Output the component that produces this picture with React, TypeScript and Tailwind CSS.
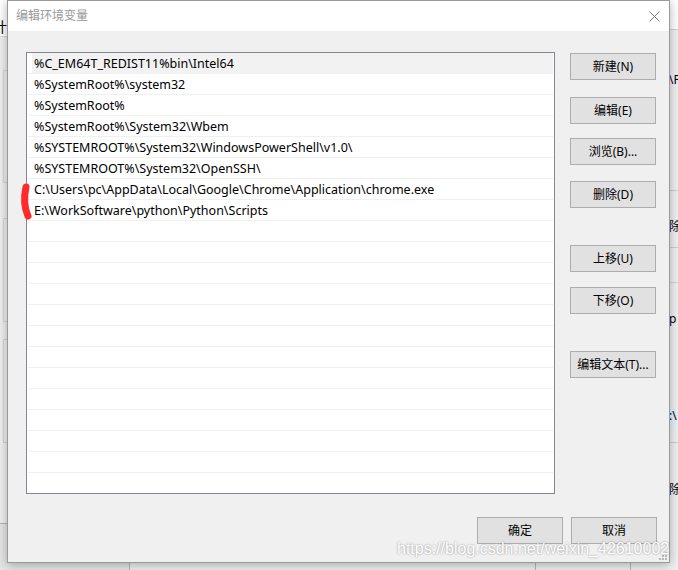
import React from "react";

const paths = [
  "%C_EM64T_REDIST11%bin\\Intel64",
  "%SystemRoot%\\system32",
  "%SystemRoot%",
  "%SystemRoot%\\System32\\Wbem",
  "%SYSTEMROOT%\\System32\\WindowsPowerShell\\v1.0\\",
  "%SYSTEMROOT%\\System32\\OpenSSH\\",
  "C:\\Users\\pc\\AppData\\Local\\Google\\Chrome\\Application\\chrome.exe",
  "E:\\WorkSoftware\\python\\Python\\Scripts",
];

const rows = Array.from({ length: 20 }, (_, i) => paths[i] ?? "");

function Btn({ label, className = "" }: { label: string; className?: string }) {
  return (
    <button
      className={
        "w-[86px] h-[27px] bg-[#e1e1e1] border border-[#adadad] text-[12px] text-black flex items-center justify-center " +
        className
      }
    >
      {label}
    </button>
  );
}

export default function App() {
  return (
    <div className="relative w-[678px] h-[570px] overflow-hidden bg-[#f0f0f0] font-['Noto_Sans','Noto_Sans_CJK_SC',sans-serif]">
      {/* background window, left side */}
      <div className="absolute left-0 top-0 w-[7px] h-[37px] bg-white border-b border-[#d9d9d9]" />
      <div className="absolute left-[-7px] top-[20px] text-[14px] leading-none text-black">计</div>
      <div className="absolute left-[3px] top-[70px] w-[20px] h-[113px] border border-[#d4d4d4]" />
      <div className="absolute left-[3px] top-[218px] w-[20px] h-[104px] border border-[#d4d4d4]" />
      <div className="absolute left-[3px] top-[339px] w-[20px] h-[104px] border border-[#d4d4d4]" />
      <div className="absolute left-0 top-[523px] w-[130px] h-[47px] bg-[#e6e6e6] border-t border-r border-[#b5b5b5]" />
      <div className="absolute left-[535px] top-[560px] w-[96px] h-[20px] border border-[#b5b5b5]" />

      {/* background window, right side */}
      <div className="absolute left-[669px] top-0 w-[9px] h-[30px] bg-white border-b border-[#d0d0d0]" />
      <div className="absolute left-[669px] top-[74px] text-[12px] leading-none">\P</div>
      <div className="absolute left-[669px] top-[190px] w-[9px] h-[58px] border-t border-b border-[#cfcfcf]" />
      <div className="absolute left-[669px] top-[221px] text-[12px] leading-none">除</div>
      <div className="absolute left-[669px] top-[282px] w-[9px] border-t border-[#d6d6d6]" />
      <div className="absolute left-[669px] top-[313px] text-[12px] leading-none">p</div>
      <div className="absolute left-[669px] top-[408px] w-[9px] h-[20px] bg-[#e5f1fb]" />
      <div className="absolute left-[669px] top-[410px] text-[12px] leading-none">:\</div>
      <div className="absolute left-[669px] top-[442px] w-[9px] border-t border-[#cfcfcf]" />
      <div className="absolute left-[669px] top-[484px] text-[12px] leading-none">除</div>

      {/* dialog window */}
      <div className="absolute left-[7px] top-0 w-[663px] h-[563px] bg-[#f0f0f0] border border-[#9a9a9a] shadow-[0_2px_10px_rgba(0,0,0,0.3)] flex flex-col">
        <div className="h-[30px] bg-white flex items-center justify-between pl-[8px] pr-[9px] shrink-0">
          <span className="text-[12px] text-[#999999]">编辑环境变量</span>
          <svg width="11" height="11" viewBox="0 0 11 11">
            <path d="M0.5 0.5L10.5 10.5M10.5 0.5L0.5 10.5" stroke="#777" strokeWidth="1" />
          </svg>
        </div>

        <div className="flex-1 flex flex-col pt-[21px] pl-[18px] pr-[12px] pb-[17px]">
          <div className="flex gap-[15px]">
            <div className="w-[529px] h-[442px] bg-white border border-[#828790] overflow-hidden">
              {rows.map((p, i) => (
                <div key={i} className="h-[21px] mx-px border-b border-[#f0f0f0]">
                  <div
                    className={
                      i === 0
                        ? "h-full ml-[4px] pl-[2px] pt-[3px] flex items-center bg-[#f2f2f2] text-[12.5px] text-black whitespace-nowrap"
                        : "h-full ml-[4px] pl-[2px] pt-[3px] flex items-center text-[12.5px] text-black whitespace-nowrap"
                    }
                  >
                    {p}
                  </div>
                </div>
              ))}
            </div>
            <div className="flex flex-col pt-px">
              <Btn label="新建(N)" />
              <Btn label="编辑(E)" className="mt-[17px]" />
              <Btn label="浏览(B)..." className="mt-[14px]" />
              <Btn label="删除(D)" className="mt-[16px]" />
              <Btn label="上移(U)" className="mt-[37px]" />
              <Btn label="下移(O)" className="mt-[15px]" />
              <Btn label="编辑文本(T)..." className="mt-[37px]" />
            </div>
          </div>
          <div className="mt-[23px] flex justify-end gap-[8px]">
            <Btn label="确定" />
            <Btn label="取消" />
          </div>
        </div>

        {/* resize grip */}
        <svg className="absolute right-[1px] bottom-[1px]" width="10" height="10" viewBox="0 0 10 10">
          <rect x="7" y="1" width="2" height="2" fill="#b8b8b8" />
          <rect x="4" y="4" width="2" height="2" fill="#b8b8b8" />
          <rect x="7" y="4" width="2" height="2" fill="#b8b8b8" />
          <rect x="1" y="7" width="2" height="2" fill="#b8b8b8" />
          <rect x="4" y="7" width="2" height="2" fill="#b8b8b8" />
          <rect x="7" y="7" width="2" height="2" fill="#b8b8b8" />
        </svg>
      </div>

      {/* red annotation stroke */}
      <svg className="absolute left-[18px] top-[180px]" width="18" height="44" viewBox="0 0 18 44">
        <path d="M8 7 C6 16, 6 27, 10 36" stroke="#ff2a2a" strokeWidth="7" strokeLinecap="round" fill="none" />
      </svg>

      {/* watermark */}
      <div className="absolute left-[397px] top-[541px] text-[16px] leading-none text-white font-['Liberation_Sans',Arial,sans-serif] [text-shadow:0_0_2px_rgba(0,0,0,0.45)] whitespace-nowrap">
        https://blog.csdn.net/weixin_42610002
      </div>
    </div>
  );
}
